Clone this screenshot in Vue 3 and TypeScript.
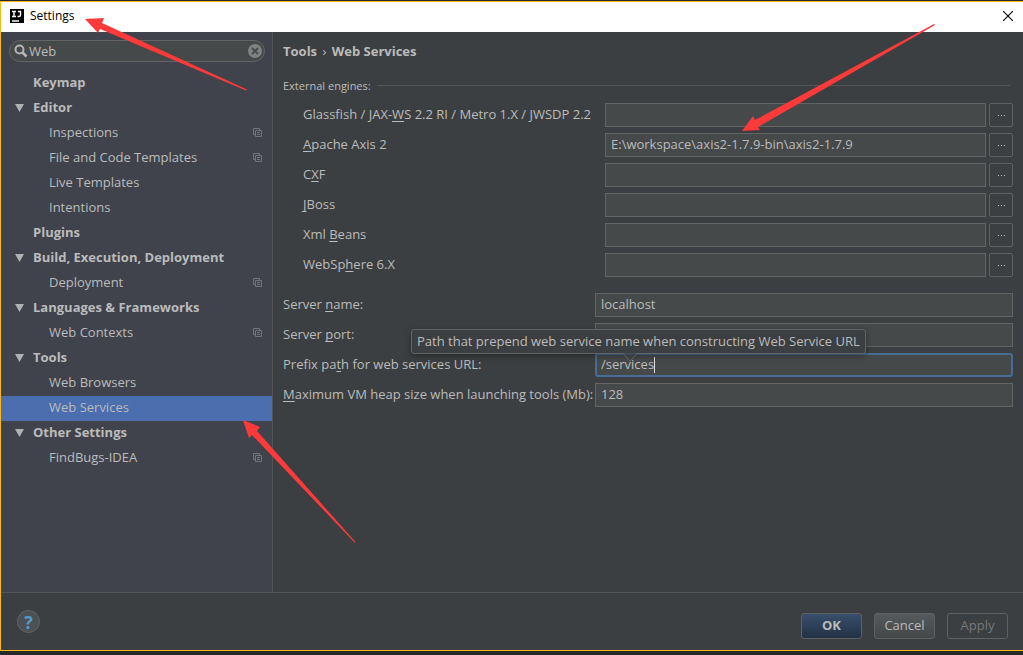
<script setup lang="ts">
import { ref } from 'vue'

interface TreeItem {
  label: string
  group?: boolean
  open?: boolean
  copy?: boolean
  selected?: boolean
}
interface Field {
  id: string
  before: string
  key: string
  after: string
  value: string
  tip?: string
}

const query = ref('Web')

const tree: TreeItem[] = [
  { label: 'Keymap', group: true },
  { label: 'Editor', group: true, open: true },
  { label: 'Inspections', copy: true },
  { label: 'File and Code Templates', copy: true },
  { label: 'Live Templates' },
  { label: 'Intentions' },
  { label: 'Plugins', group: true },
  { label: 'Build, Execution, Deployment', group: true, open: true },
  { label: 'Deployment', copy: true },
  { label: 'Languages & Frameworks', group: true, open: true },
  { label: 'Web Contexts', copy: true },
  { label: 'Tools', group: true, open: true },
  { label: 'Web Browsers' },
  { label: 'Web Services', selected: true },
  { label: 'Other Settings', group: true, open: true },
  { label: 'FindBugs-IDEA', copy: true },
]

const engines = ref<Field[]>([
  { id: 'glassfish', before: 'Glassfish / JAX-', key: 'W', after: 'S 2.2 RI / Metro 1.X / JWSDP 2.2', value: '' },
  { id: 'axis', before: '', key: 'A', after: 'pache Axis 2', value: 'E:\\workspace\\axis2-1.7.9-bin\\axis2-1.7.9' },
  { id: 'cxf', before: 'C', key: 'X', after: 'F', value: '' },
  { id: 'jboss', before: '', key: 'J', after: 'Boss', value: '' },
  { id: 'xmlbeans', before: 'Xml ', key: 'B', after: 'eans', value: '' },
  { id: 'websphere', before: 'WebSp', key: 'h', after: 'ere 6.X', value: '' },
])

const server = ref<Field[]>([
  { id: 'name', before: 'Server ', key: 'n', after: 'ame:', value: 'localhost' },
  { id: 'port', before: 'Server ', key: 'p', after: 'ort:', value: '' },
  {
    id: 'prefix', before: 'Prefix pa', key: 't', after: 'h for web services URL:', value: '/services',
    tip: 'Path that prepend web service name when constructing Web Service URL',
  },
  { id: 'heap', before: '', key: 'M', after: 'aximum VM heap size when launching tools (Mb):', value: '128' },
])
</script>

<template>
  <div class="desktop">
    <div class="window">
      <header class="titlebar">
        <svg class="logo" viewBox="0 0 14 14" aria-hidden="true">
          <rect width="14" height="14" fill="#000" />
          <path d="M2 2.5h4M4 2.5v5M2 7.5h4M8 2.5h3M10.5 2v4q0 1.5-1.5 1.5H7.5M2 12h7" fill="none" stroke="#fff" stroke-width="1.4" />
        </svg>
        <h1>Settings</h1>
        <button class="close" type="button" aria-label="Close">
          <svg viewBox="0 0 10 10"><path d="M0 0L10 10M10 0L0 10" stroke="#000" stroke-width="1.1" /></svg>
        </button>
      </header>

      <div class="body">
        <aside class="sidebar">
          <div class="search">
            <svg class="lens" viewBox="0 0 14 14" aria-hidden="true">
              <circle cx="5.5" cy="5.5" r="4" fill="none" stroke="#b4b6b6" stroke-width="2" />
              <path d="M8.5 8.5L12.5 12.5" stroke="#b4b6b6" stroke-width="2.6" />
            </svg>
            <input v-model="query" type="text" aria-label="Search settings" />
            <button type="button" aria-label="Clear search" @click="query = ''">
              <svg viewBox="0 0 14 14">
                <circle cx="7" cy="7" r="7" fill="#7f8182" />
                <path d="M4 4L10 10M10 4L4 10" stroke="#45494a" stroke-width="1.8" />
              </svg>
            </button>
          </div>
          <nav>
            <a v-for="item in tree" :key="item.label" href="#" :class="['row', { group: item.group, selected: item.selected }]">
              <span class="twisty">
                <svg v-if="item.open" viewBox="0 0 9 10"><path d="M0 2H9L4.5 10Z" fill="#afb1b3" /></svg>
              </span>
              <span class="text">{{ item.label }}</span>
              <svg v-if="item.copy" class="copy" viewBox="0 0 9 9" fill="none" stroke="#72767b" aria-hidden="true">
                <path d="M2 6.5H0.5V0.5H6.5V2M2.5 2.5H8.5V8.5H2.5ZM4 4.5H7M4 6.5H7" />
              </svg>
            </a>
          </nav>
        </aside>

        <main>
          <h2>Tools <span>›</span> Web Services</h2>
          <fieldset>
            <legend>External engines:</legend>
            <div v-for="f in engines" :key="f.id" class="engine">
              <label :for="f.id">{{ f.before }}<u>{{ f.key }}</u>{{ f.after }}</label>
              <input :id="f.id" v-model="f.value" class="box" type="text" />
              <button type="button" class="browse" :aria-label="'Browse ' + f.id">
                <i></i><i></i><i></i>
              </button>
            </div>
          </fieldset>
          <div class="server">
            <div v-for="f in server" :key="f.id" class="field">
              <label :for="f.id">{{ f.before }}<u>{{ f.key }}</u>{{ f.after }}</label>
              <div class="holder">
                <input :id="f.id" v-model="f.value" :class="['box', { focused: f.tip }]" type="text" />
                <template v-if="f.tip">
                  <span class="caret"></span>
                  <div class="tip" role="tooltip">
                    {{ f.tip }}
                    <svg viewBox="0 0 14 9" aria-hidden="true">
                      <path d="M0 0H14L7 8Z" fill="#3c3f41" fill-opacity="0.6" />
                      <path d="M0 0.5L7 8L14 0.5" fill="none" stroke="#616567" />
                    </svg>
                  </div>
                </template>
              </div>
            </div>
          </div>
        </main>
      </div>

      <footer>
        <button class="help" type="button" aria-label="Help">?</button>
        <button class="btn primary" type="button">OK</button>
        <button class="btn" type="button">Cancel</button>
        <button class="btn" type="button" disabled>Apply</button>
      </footer>
    </div>

    <svg class="arrows" viewBox="0 0 1023 655" fill="#fd3a3a" aria-hidden="true">
      <path d="M85 19L104 18L102 23L247 89.5L246 90.5L100 29L98 33Z" />
      <path d="M742 131L753 116L755 120L934 24L935 25L758 127L760 130Z" />
      <path d="M243 420L260 427L257 431L355.5 542L354.5 542.5L252 435L249 438Z" />
    </svg>
  </div>
</template>

<style>
body {
  background: #262829;
}
</style>

<style scoped>
* {
  box-sizing: border-box;
}
.desktop {
  position: relative;
  display: flex;
  flex-direction: column;
  min-height: 100vh;
  padding: 2px 0 4px;
  background: #262829;
  color: #bbbbbb;
  font: 13px/18px "Open Sans", "Noto Sans", sans-serif;
}
input,
button {
  font: inherit;
  color: inherit;
  margin: 0;
}
button {
  padding: 0;
}
.window {
  display: flex;
  flex-direction: column;
  flex: 1;
  border: 1px solid #fbb917;
  border-right: 0;
  margin-top: -1px;
  background: #3c3f41;
}
.titlebar {
  display: flex;
  align-items: center;
  height: 30px;
  padding: 0 10px 2px 9px;
  background: #fff;
  color: #000;
}
.logo {
  width: 14px;
  height: 14px;
}
h1 {
  flex: 1;
  margin: 0 0 0 6px;
  font-size: 12px;
  line-height: 18px;
  font-weight: 400;
}
.close {
  display: flex;
  border: 0;
  background: none;
}
.close svg {
  width: 10px;
  height: 10px;
}
.body {
  display: flex;
  flex: 1;
}
.sidebar {
  width: 272px;
  padding-top: 8px;
  background: #40434c;
  border-right: 1px solid #555555;
}
.search {
  display: flex;
  align-items: center;
  height: 22px;
  margin: 0 7px 9px 8px;
  padding: 0 2px 0 4px;
  border: 1px solid #646464;
  border-radius: 11px;
  background: #45494a;
}
.search input {
  flex: 1;
  min-width: 0;
  height: 18px;
  padding: 0;
  border: 0;
  outline: 0;
  background: none;
}
.search svg {
  display: block;
  width: 14px;
  height: 14px;
}
.search .lens {
  margin-right: 1px;
}
.search button {
  border: 0;
  background: none;
}
.row {
  display: flex;
  align-items: center;
  height: 25px;
  padding: 0 10px 3px 0;
  color: inherit;
  text-decoration: none;
}
.twisty {
  width: 48px;
  padding-left: 14px;
}
.twisty svg {
  display: block;
  width: 9px;
  height: 10px;
}
.group .twisty {
  width: 32px;
}
.group {
  font-weight: 700;
}
.text {
  flex: 1;
}
.selected {
  background: #4b6eaf;
}
.copy {
  width: 9px;
  height: 9px;
}
main {
  flex: 1;
  min-width: 0;
  padding: 10px 10px 0;
}
h2 {
  margin: 0;
  font-size: 13px;
  line-height: 18px;
  font-weight: 700;
}
h2 span {
  margin: 0 2px;
  font-weight: 400;
}
fieldset {
  min-width: 0;
  margin: 0;
  padding: 17px 0 0;
  border: 0;
}
legend {
  display: flex;
  align-items: center;
  float: left;
  width: 100%;
  height: 18px;
  margin-bottom: 8px;
  padding: 0 2px 0 0;
  font-size: 11px;
}
legend::after {
  content: "";
  flex: 1;
  height: 1px;
  margin: 0 0 2px 6px;
  background: #555555;
}
.engine {
  display: flex;
  clear: both;
  align-items: center;
  margin-bottom: 6px;
}
.engine label {
  width: 322px;
  padding: 0 0 2px 20px;
  white-space: nowrap;
}
u {
  text-underline-offset: 2px;
  text-decoration-skip-ink: none;
}
.box {
  flex: 1;
  min-width: 0;
  width: 100%;
  height: 24px;
  padding: 0 5px 2px;
  border: 1px solid #646464;
  outline: 0;
  background: #45494a;
}
.browse {
  display: flex;
  align-items: center;
  justify-content: center;
  gap: 2px;
  width: 24px;
  height: 24px;
  margin-left: 3px;
  border: 1px solid #5e6162;
  border-radius: 2px;
  background: #3c3f41;
}
.browse i {
  width: 1px;
  height: 1px;
  background: #bbbbbb;
}
.server {
  display: grid;
  gap: 6px;
  padding-top: 10px;
}
.field {
  display: flex;
  align-items: center;
}
.field label {
  width: 312px;
  padding-bottom: 2px;
  white-space: nowrap;
}
.holder {
  position: relative;
  display: flex;
  flex: 1;
}
.focused {
  border: 2px solid #466d94;
  border-radius: 3px;
  padding: 0 4px 2px;
}
.caret {
  position: absolute;
  left: 59px;
  top: 4px;
  width: 1px;
  height: 16px;
  background: #dddddd;
}
.tip {
  position: absolute;
  left: -184px;
  bottom: 23px;
  height: 25px;
  padding: 0 5px;
  border: 1px solid #616567;
  border-radius: 3px;
  background: #3c3f41;
  box-shadow: 0 2px 6px rgba(0, 0, 0, 0.35);
  line-height: 23px;
  white-space: nowrap;
}
.tip svg {
  position: absolute;
  left: 211px;
  top: 23px;
  width: 14px;
  height: 9px;
}
footer {
  display: flex;
  align-items: center;
  gap: 12px;
  height: 58px;
  padding: 8px 15px 0 16px;
  border-top: 1px solid #555555;
}
.help {
  width: 23px;
  height: 23px;
  margin: 0 auto 8px 0;
  border: 1px solid #626566;
  border-radius: 50%;
  background: #4c5052;
  color: #4e9dca;
  font-size: 18px;
  font-weight: 700;
  line-height: 20px;
}
.btn {
  width: 61px;
  height: 26px;
  padding-bottom: 2px;
  border: 1px solid #5e6162;
  border-radius: 3px;
  background: linear-gradient(#555a5c, #434748);
}
.btn:disabled {
  background: #3c3f41;
  color: #777777;
}
.primary {
  background: linear-gradient(#384f6b, #233143);
  font-weight: 700;
}
.arrows {
  position: absolute;
  left: 0;
  top: 0;
  width: 1023px;
  height: 655px;
  pointer-events: none;
}
</style>
